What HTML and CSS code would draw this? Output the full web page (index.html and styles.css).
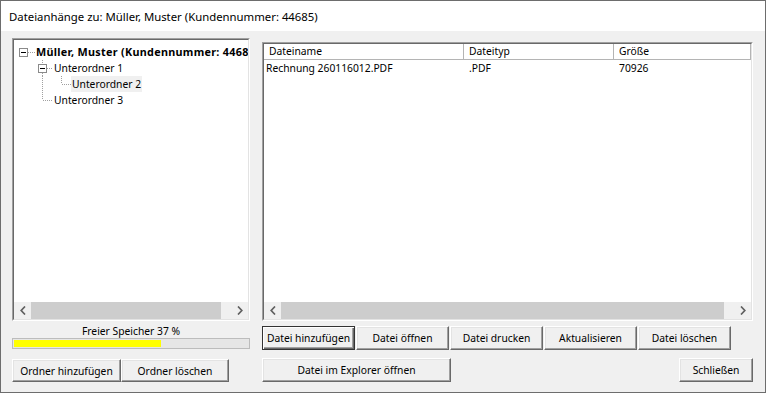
FILE: index.html
```html
<!DOCTYPE html>
<html lang="de">
<head>
<meta charset="utf-8">
<title>Dateianhänge</title>
<link rel="stylesheet" href="styles.css">
</head>
<body>
<div class="window">
  <div class="titlebar">Dateianhänge zu: Müller, Muster (Kundennummer: 44685)</div>
  <div class="main">
    <div class="left">
      <div class="sunken tree">
        <div class="sunken-inner">
          <div class="tree-body">
            <div class="trow">
              <svg class="gut" width="21" height="16" viewBox="0 0 21 16">
                <rect x="5.5" y="4.5" width="8" height="8" fill="#fff" stroke="#8a8a8a"/>
                <line x1="7" y1="8.5" x2="12" y2="8.5" stroke="#000"/>
                <line x1="14" y1="8.5" x2="21" y2="8.5" stroke="#a0a0a0" stroke-dasharray="1 1"/>
              </svg>
              <span class="tlabel root">Müller, Muster (Kundennummer: 44685)</span>
            </div>
            <div class="trow">
              <svg class="gut" width="39" height="16" viewBox="0 0 39 16">
                <line x1="28.5" y1="0" x2="28.5" y2="4" stroke="#a0a0a0" stroke-dasharray="1 1"/>
                <line x1="28.5" y1="13" x2="28.5" y2="16" stroke="#a0a0a0" stroke-dasharray="1 1"/>
                <rect x="24.5" y="4.5" width="8" height="8" fill="#fff" stroke="#8a8a8a"/>
                <line x1="26" y1="8.5" x2="31" y2="8.5" stroke="#000"/>
                <line x1="33" y1="8.5" x2="39" y2="8.5" stroke="#a0a0a0" stroke-dasharray="1 1"/>
              </svg>
              <span class="tlabel">Unterordner 1</span>
            </div>
            <div class="trow">
              <svg class="gut" width="57" height="16" viewBox="0 0 57 16">
                <line x1="28.5" y1="0" x2="28.5" y2="16" stroke="#a0a0a0" stroke-dasharray="1 1"/>
                <line x1="47.5" y1="0" x2="47.5" y2="8" stroke="#a0a0a0" stroke-dasharray="1 1"/>
                <line x1="48" y1="8.5" x2="57" y2="8.5" stroke="#a0a0a0" stroke-dasharray="1 1"/>
              </svg>
              <span class="tlabel selected">Unterordner 2</span>
            </div>
            <div class="trow">
              <svg class="gut" width="39" height="16" viewBox="0 0 39 16">
                <line x1="28.5" y1="0" x2="28.5" y2="8" stroke="#a0a0a0" stroke-dasharray="1 1"/>
                <line x1="29" y1="8.5" x2="39" y2="8.5" stroke="#a0a0a0" stroke-dasharray="1 1"/>
              </svg>
              <span class="tlabel">Unterordner 3</span>
            </div>
          </div>
          <div class="hscroll">
            <div class="sbtn"><svg width="6" height="9" viewBox="0 0 6 9"><polyline points="5,0.5 1.2,4.5 5,8.5" fill="none" stroke="#606060" stroke-width="1.7"/></svg></div>
            <div class="thumb tree-thumb"></div>
            <div class="track"></div>
            <div class="sbtn"><svg width="6" height="9" viewBox="0 0 6 9"><polyline points="1,0.5 4.8,4.5 1,8.5" fill="none" stroke="#606060" stroke-width="1.7"/></svg></div>
          </div>
        </div>
      </div>
      <div class="free-label">Freier Speicher 37 %</div>
      <div class="progress"><div class="fill" style="width: 63%"></div></div>
      <div class="btnrow left-btns">
        <button class="btn w109">Ordner hinzufügen</button>
        <button class="btn w108">Ordner löschen</button>
      </div>
    </div>
    <div class="right">
      <div class="sunken list">
        <div class="sunken-inner">
          <div class="lhead">
            <div class="hcell c1">Dateiname</div>
            <div class="hcell c2">Dateityp</div>
            <div class="hcell c3">Größe</div>
          </div>
          <div class="lbody">
            <div class="lrow">
              <div class="cell c1 first">Rechnung 260116012.PDF</div>
              <div class="cell c2">.PDF</div>
              <div class="cell c3">70926</div>
            </div>
          </div>
          <div class="hscroll">
            <div class="sbtn"><svg width="6" height="9" viewBox="0 0 6 9"><polyline points="5,0.5 1.2,4.5 5,8.5" fill="none" stroke="#606060" stroke-width="1.7"/></svg></div>
            <div class="thumb list-thumb"></div>
            <div class="track"></div>
            <div class="sbtn"><svg width="6" height="9" viewBox="0 0 6 9"><polyline points="1,0.5 4.8,4.5 1,8.5" fill="none" stroke="#606060" stroke-width="1.7"/></svg></div>
          </div>
        </div>
      </div>
      <div class="btnrow row1">
        <button class="btn w93 focus">Datei hinzufügen</button>
        <button class="btn w93">Datei öffnen</button>
        <button class="btn w93">Datei drucken</button>
        <button class="btn w93">Aktualisieren</button>
        <button class="btn w93">Datei löschen</button>
      </div>
      <div class="btnrow row2">
        <button class="btn w189">Datei im Explorer öffnen</button>
        <button class="btn w74">Schließen</button>
      </div>
    </div>
  </div>
</div>
</body>
</html>
```

FILE: styles.css
```css
* { box-sizing: border-box; }
html, body { margin: 0; padding: 0; }
body {
  width: 766px;
  height: 393px;
  overflow: hidden;
  font-family: "Noto Sans", "Liberation Sans", sans-serif;
  font-size: 10.3px;
  color: #000;
  background: #f0f0f0;
}
.window {
  width: 766px;
  height: 393px;
  border: 1px solid #6d6d6d;
  display: flex;
  flex-direction: column;
  background: #f0f0f0;
}
.titlebar {
  height: 30px;
  flex: none;
  background: #fff;
  padding-left: 8px;
  display: flex;
  align-items: center;
  font-size: 11.35px;
}
.main {
  flex: 1;
  display: flex;
  padding: 7px 11px 0 11px;
}
.left {
  width: 238px;
  flex: none;
  display: flex;
  flex-direction: column;
}
.right {
  width: 491px;
  flex: none;
  margin-left: 12px;
  display: flex;
  flex-direction: column;
}
.sunken {
  border: 1px solid;
  border-color: #a0a0a0 #fff #fff #a0a0a0;
}
.sunken-inner {
  border: 1px solid;
  border-color: #696969 #e3e3e3 #e3e3e3 #696969;
  background: #fff;
  height: 100%;
  display: flex;
  flex-direction: column;
  overflow: hidden;
}
.tree { height: 283px; flex: none; }
.tree-body { flex: 1; padding-top: 4px; overflow: hidden; }
.trow {
  height: 16px;
  display: flex;
  align-items: center;
  white-space: nowrap;
}
.gut { flex: none; display: block; }
.tlabel { padding: 0 1px; line-height: 16px; }
.tlabel.root { font-weight: bold; font-size: 10.8px; letter-spacing: 0.3px; }
.tlabel.selected { background: #f0f0f0; }

.hscroll {
  height: 17px;
  flex: none;
  display: flex;
  background: #f0f0f0;
}
.sbtn {
  width: 17px;
  flex: none;
  display: flex;
  align-items: center;
  justify-content: center;
}
.sbtn svg { display: block; }
.thumb { background: #cdcdcd; flex: none; }
.tree-thumb { width: 190px; }
.list-thumb { width: 443px; }
.track { flex: 1; }

.free-label {
  margin-top: 3px;
  height: 14px;
  line-height: 14px;
  text-align: center;
}
.progress {
  height: 11px;
  border: 1px solid #bcbcbc;
  background: #e6e6e6;
  padding: 1px;
}
.fill { height: 100%; background: #ffff00; }

.btnrow { display: flex; }
.left-btns { margin-top: 10px; }
.btn {
  font: inherit;
  color: #000;
  background: #f0f0f0;
  border: 1px solid;
  border-color: #fff #696969 #696969 #fff;
  box-shadow: inset -1px -1px #a0a0a0, inset 1px 1px #e3e3e3;
  padding: 0;
  height: 23px;
  flex: none;
  white-space: nowrap;
  overflow: hidden;
}
.btn.focus {
  border-color: #333;
  box-shadow: inset 1px 1px #fff, inset -1px -1px #696969, inset -2px -2px #a0a0a0;
}
.w109 { width: 109px; }
.w108 { width: 108px; }
.w93 { width: 93px; }
.w189 { width: 189px; }
.w74 { width: 74px; }

.list { height: 279px; flex: none; margin-top: 4px; }
.lhead {
  height: 16px;
  flex: none;
  display: flex;
  border-bottom: 1px solid #b4b4b4;
}
.hcell {
  height: 100%;
  line-height: 15px;
  padding-left: 5px;
  border-right: 1px solid #b4b4b4;
  white-space: nowrap;
}
.c1 { width: 200px; flex: none; }
.c2 { width: 150px; flex: none; }
.c3 { flex: 1; }
.lbody { flex: 1; }
.lrow { height: 16px; display: flex; }
.cell { line-height: 16px; padding-left: 5px; white-space: nowrap; }
.cell.first { padding-left: 2px; }
.row1 { margin-top: 5px; gap: 1px; }
.row1 .btn { height: 24px; }
.row2 { margin-top: 8px; justify-content: space-between; }
.row2 .btn { height: 24px; }
```
